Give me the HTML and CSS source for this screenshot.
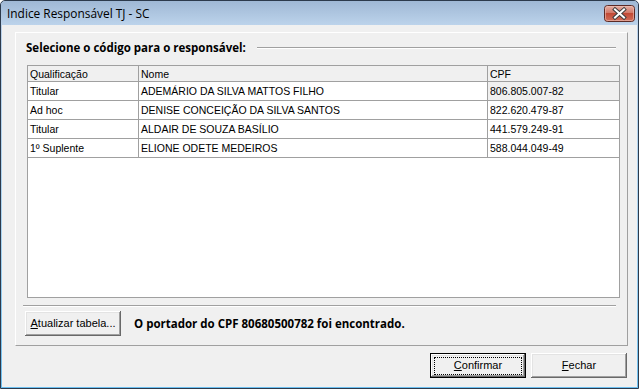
FILE: index.html
```html
<!DOCTYPE html>
<html lang="pt-BR">
<head>
<meta charset="utf-8">
<title>Indice Responsável TJ - SC</title>
<link rel="stylesheet" href="styles.css">
</head>
<body>
<div class="window">
  <div class="titlebar">
    <span class="title">Indice Responsável TJ - SC</span>
    <div class="close" aria-label="Fechar">
      <svg width="31" height="17" viewBox="0 0 31 17">
        <defs>
          <linearGradient id="cg" x1="0" y1="0" x2="0" y2="1">
            <stop offset="0" stop-color="#e6b1a6"/>
            <stop offset="0.45" stop-color="#d27a6a"/>
            <stop offset="0.5" stop-color="#c24a36"/>
            <stop offset="1" stop-color="#d2705c"/>
          </linearGradient>
        </defs>
        <rect x="0.5" y="0.5" width="30" height="16" rx="3" ry="3" fill="url(#cg)" stroke="#5c2a25"/>
        <rect x="1.5" y="1.5" width="28" height="14" rx="2" ry="2" fill="none" stroke="#eec3b9" stroke-opacity="0.6"/>
        <path d="M11 4.5 L20 12.5 M20 4.5 L11 12.5" stroke="#3d3d3d" stroke-width="4" stroke-linecap="square"/>
        <path d="M11 4.5 L20 12.5 M20 4.5 L11 12.5" stroke="#ffffff" stroke-width="2" stroke-linecap="square"/>
      </svg>
    </div>
  </div>
  <div class="client">
    <div class="panel">
      <div class="legend">
        <span class="legend-text">Selecione o código para o responsável:</span>
        <div class="rule"></div>
      </div>
      <div class="grid">
        <div class="row head">
          <div class="cell">Qualificação</div>
          <div class="cell">Nome</div>
          <div class="cell last">CPF</div>
        </div>
        <div class="row">
          <div class="cell">Titular</div>
          <div class="cell">ADEMÁRIO DA SILVA MATTOS FILHO</div>
          <div class="cell last current">806.805.007-82</div>
        </div>
        <div class="row">
          <div class="cell">Ad hoc</div>
          <div class="cell">DENISE CONCEIÇÃO DA SILVA SANTOS</div>
          <div class="cell last">822.620.479-87</div>
        </div>
        <div class="row">
          <div class="cell">Titular</div>
          <div class="cell">ALDAIR DE SOUZA BASÍLIO</div>
          <div class="cell last">441.579.249-91</div>
        </div>
        <div class="row">
          <div class="cell">1º Suplente</div>
          <div class="cell">ELIONE ODETE MEDEIROS</div>
          <div class="cell last">588.044.049-49</div>
        </div>
      </div>
      <div class="sep"></div>
      <div class="actions">
        <button class="btn"><u>A</u>tualizar tabela...</button>
        <span class="status">O portador do CPF 80680500782 foi encontrado.</span>
      </div>
    </div>
    <div class="footer">
      <button class="btn default"><u>C</u>onfirmar</button>
      <button class="btn"><u>F</u>echar</button>
    </div>
  </div>
</div>
</body>
</html>
```

FILE: styles.css
```css
* { box-sizing: border-box; }

html, body {
  margin: 0;
  padding: 0;
  background: #ffffff;
}

.window {
  width: 639px;
  height: 389px;
  border: 1px solid #2c3a4c;
  border-radius: 5px 5px 0 0;
  background: linear-gradient(#a3bcd9 0, #bad1ea 24px, #a9d3f0 60%, #6cbff0 100%);
  display: flex;
  flex-direction: column;
  padding: 0 1px 1px 1px;
  overflow: hidden;
}

.titlebar {
  height: 24px;
  margin: 0 -1px;
  padding: 0 3px 0 6px;
  display: flex;
  align-items: flex-start;
  justify-content: space-between;
  background: linear-gradient(#9fb8d5, #bcd3eb);
  border-radius: 4px 4px 0 0;
}

.title {
  font-family: "Open Sans", "Noto Sans", sans-serif;
  font-size: 11.9px;
  color: #000;
  line-height: 16px;
  margin-top: 4px;
}

.close {
  width: 31px;
  height: 17px;
  margin-top: 4px;
  display: flex;
}

.client {
  flex: 1;
  background: #f0f0f0;
  padding: 7px 9px 9px 13px;
  display: flex;
  flex-direction: column;
}

.panel {
  height: 314px;
  border-top: 1px solid #ffffff;
  border-left: 1px solid #ffffff;
  border-right: 1px solid #a0a0a0;
  border-bottom: 1px solid #a0a0a0;
  padding: 7px 0 9px 0;
  display: flex;
  flex-direction: column;
}

.legend {
  height: 14px;
  display: flex;
  align-items: center;
  padding: 0 11px 0 10px;
}

.legend-text,
.status {
  font-family: "Open Sans", "Noto Sans", sans-serif;
  font-weight: bold;
  font-size: 11.5px;
  color: #000;
  white-space: nowrap;
}

.rule {
  flex: 1;
  margin-left: 11px;
  height: 2px;
  border-top: 1px solid #a0a0a0;
  border-bottom: 1px solid #ffffff;
  margin-top: 1px;
}

.grid {
  margin: 11px 7px 0 11px;
  height: 233px;
  border: 1px solid #a0a0a0;
  background: #ffffff;
  font-family: "Liberation Sans", Arial, sans-serif;
  font-size: 10.5px;
  color: #000;
}

.row {
  display: grid;
  grid-template-columns: 111px 349px 131px;
  height: 19px;
}

.row.head {
  height: 16px;
  background: #f0f0f0;
}

.cell {
  border-right: 1px solid #a0a0a0;
  border-bottom: 1px solid #a0a0a0;
  padding-left: 2px;
  display: flex;
  align-items: center;
  white-space: nowrap;
  overflow: hidden;
}

.cell.last {
  border-right: none;
}

.cell.current {
  background: #f0f0f0;
}

.sep {
  margin: 7px 11px 0 7px;
  height: 2px;
  border-top: 1px solid #a0a0a0;
  border-bottom: 1px solid #ffffff;
}

.actions {
  margin-top: 4px;
  padding-left: 9px;
  display: flex;
  align-items: center;
}

.status {
  margin-left: 13px;
}

.btn {
  position: relative;
  width: 96px;
  height: 25px;
  padding: 0;
  margin: 0;
  background: #f0f0f0;
  border: none;
  box-shadow:
    inset -1px -1px 0 #696969,
    inset 1px 1px 0 #ffffff,
    inset -2px -2px 0 #a0a0a0,
    inset 2px 2px 0 #e3e3e3;
  font-family: "Liberation Sans", Arial, sans-serif;
  font-size: 11px;
  color: #000;
  text-align: center;
  line-height: 23px;
}

.btn u {
  text-decoration: underline;
  text-underline-offset: 1px;
}

.footer {
  margin-top: 7px;
  padding-right: 1px;
  display: flex;
  justify-content: flex-end;
  gap: 5px;
}

.btn.default {
  border: 1px solid #000000;
  line-height: 21px;
}

.btn.default::after {
  content: "";
  position: absolute;
  left: 3px;
  right: 3px;
  top: 3px;
  bottom: 2px;
  border: 1px dotted #000000;
}
```
